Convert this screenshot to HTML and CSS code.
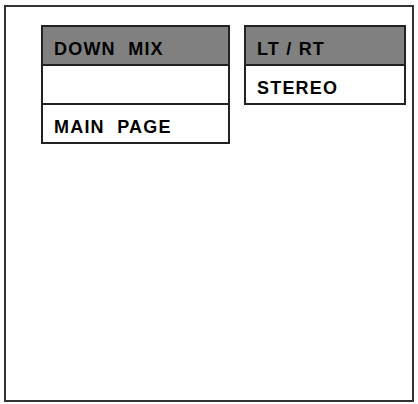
FILE: index.html
```html
<!DOCTYPE html>
<html>
<head>
    <meta charset="UTF-8">
    <meta name="viewport" content="width=device-width, initial-scale=1.0">
    <title>Down Mix</title>
    <link rel="stylesheet" href="styles.css">
</head>
<body>
    <div id="screen">
        <div class="menus">
            <div class="menu menu_main">
                <div class="item item_head">DOWN&nbsp; MIX</div>
                <div class="item"></div>
                <div class="item">MAIN&nbsp; PAGE</div>
            </div>
            <div class="menu menu_sub">
                <div class="item item_head">LT / RT</div>
                <div class="item">STEREO</div>
            </div>
        </div>
    </div>
</body>
</html>
```

FILE: styles.css
```css
html, body {
    margin: 0;
    padding: 0;
    background-color: #fff;
}

body {
    font-family: "Liberation Sans", Arial, sans-serif;
    color: #000;
}

#screen {
    margin: 5px 0 0 4px;
    width: 410px;
    height: 397px;
    box-sizing: border-box;
    border: 2px solid #333;
    padding: 18px 0 0 35px;
}

.menus {
    display: flex;
    align-items: flex-start;
    gap: 14px;
}

.menu {
    border: 2px solid #222;
}

.menu_main {
    width: 185px;
}

.menu_sub {
    width: 158px;
}

.item {
    height: 37px;
    box-sizing: border-box;
    padding: 8px 0 0 11px;
    display: flex;
    align-items: center;
    font-size: 18px;
    font-weight: bold;
    letter-spacing: 1.2px;
}

.item + .item {
    border-top: 2px solid #222;
    height: 39px;
}

.item_head {
    background-color: #808080;
}
```
